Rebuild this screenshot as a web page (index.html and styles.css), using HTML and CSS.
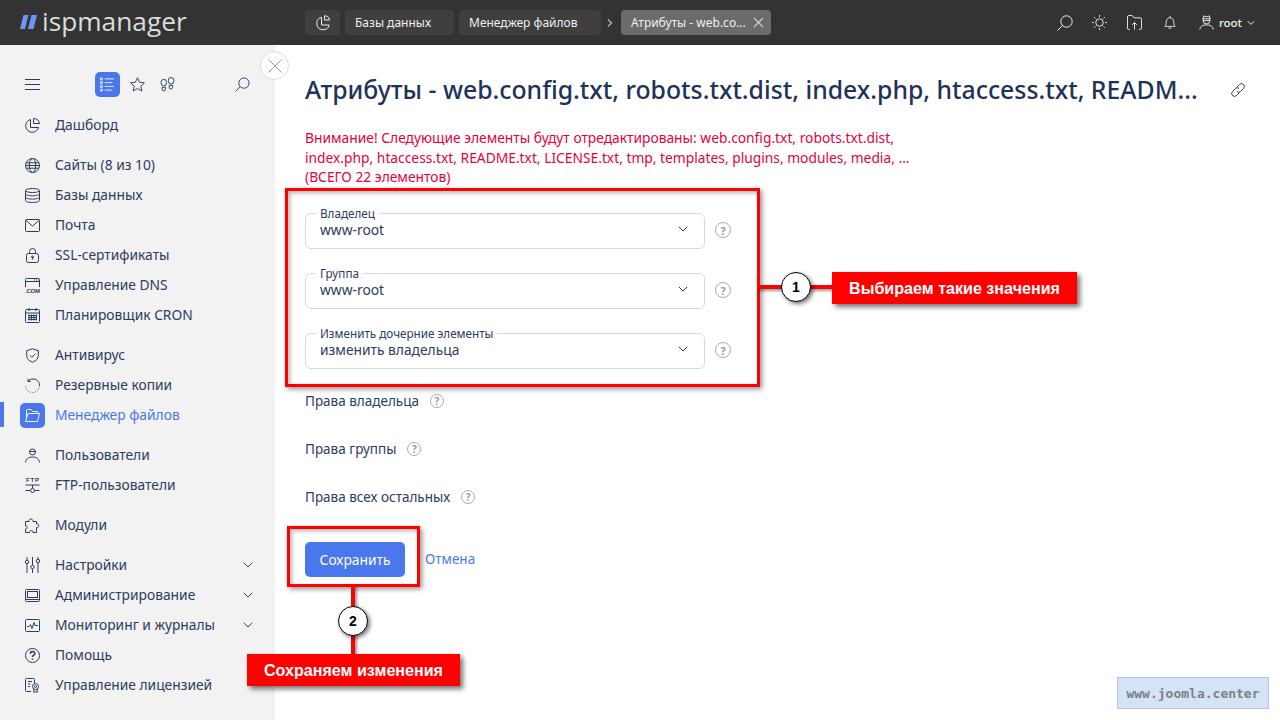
FILE: index.html
```html
<!DOCTYPE html>
<html lang="en">

<head>
    <meta charset="UTF-8">
    <meta name="viewport" content="width=device-width, initial-scale=1.0">
    <title>Атрибуты</title>
    <link rel="stylesheet" href="styles.css">
</head>

<body>
    <header class="topbar">
        <div class="logo">
            <svg class="logo-mark" width="17" height="14" viewBox="0 0 17 14"><path d="M3.500 0h5L5 14H0zM11.500 0H17l-3.500 14H8z" fill="#6d95f5"/></svg>
            <span>ispmanager</span>
        </div>
        <nav class="tabs">
            <a class="tab tab-home">
                <svg class="ico-w" width="16" height="16" viewBox="0 0 16 16"><path d="M6.500 2.300A6.300 6.300 0 1 0 14.200 10H6.500z"/><path d="M9.500.8v4.200h5a5 5 0 0 0-5-4.200z"/></svg>
            </a>
            <a class="tab">Базы данных</a>
            <a class="tab">Менеджер файлов</a>
            <svg class="tab-sep" width="10" height="8" viewBox="0 0 10 8"><path d="M2 .5L5.500 4 2 7.500"/></svg>
            <a class="tab tab-active">Атрибуты - web.co...
                <svg class="tab-close" width="11" height="11" viewBox="0 0 11 11"><path d="M1 1l9 9M10 1l-9 9"/></svg>
            </a>
        </nav>
        <div class="top-icons">
            <svg class="ico-w top-search" width="16" height="16" viewBox="0 0 16 16"><circle cx="9.500" cy="6.500" r="5.700"/><path d="M5.500 10.500L.5 15.500"/></svg>
            <svg class="ico-w" width="15" height="15" viewBox="0 0 16 16"><circle cx="8" cy="8" r="4"/><path d="M8 0v2M8 14v2M0 8h2M14 8h2M2.300 2.300l1.400 1.400M12.300 12.300l1.400 1.400M2.300 13.700l1.400-1.400M12.300 3.700l1.400-1.400"/></svg>
            <svg class="ico-w" width="15" height="15" viewBox="0 0 16 16"><path d="M3 15.500H2a1.500 1.500 0 0 1-1.500-1.500V2A1.500 1.500 0 0 1 2 .5h3.500L7.500 3h6.500A1.500 1.500 0 0 1 15.500 4.500V14a1.500 1.500 0 0 1-1.500 1.500h-1M8 15.500V8M5.500 10.500L8 8l2.500 2.500"/></svg>
            <svg class="ico-w bell" width="12" height="15" viewBox="0 0 14 16"><path d="M1 12.500c1-1 1.500-2 1.500-4.500C2.500 4.500 4.500 2.500 7 2.500s4.500 2 4.500 5.500c0 2.500.5 3.500 1.500 4.500zM7 2.500V.5M5 14.500h4"/></svg>
            <div class="user">
                <svg class="ico-w" width="15" height="15" viewBox="0 0 16 16"><path d="M4.500 3.500L5 1l3 .8L11 1l.5 2.500M3.500 4h9M4.500 4v2.500a3.500 3 0 0 0 7 0V4M4.500 6h7M.8 15.500c.5-3.500 3-5 7.200-5s6.700 1.500 7.200 5"/></svg>
                <span>root</span>
                <svg class="ico-w" width="8" height="6" viewBox="0 0 8 6"><path d="M.8 1.200L4 4.400l3.200-3.200"/></svg>
            </div>
        </div>
    </header>

    <div class="page">
        <aside class="sidebar">
            <button class="collapse">
                <svg width="14" height="14" viewBox="0 0 14 14"><path d="M.5.500l13 13M13.500.500l-13 13"/></svg>
            </button>
            <div class="side-tools">
                <svg class="ico" width="15" height="11" viewBox="0 0 15 11"><path d="M0 .5h15M0 5.500h15M0 10.500h15"/></svg>
                <div class="tool-group">
                    <span class="tool-active">
                        <svg class="ico-w" width="15" height="15" viewBox="0 0 16 15"><path d="M5 1.500h10M5 5.500h8M5 9.500h10M5 13.500h8"/><path d="M.5.500h2v2h-2zM.5 4.500h2v2h-2zM.5 8.500h2v2h-2zM.5 12.500h2v2h-2z"/></svg>
                    </span>
                    <svg class="ico" width="15" height="15" viewBox="0 0 16 16"><path d="M8 .8l2.200 4.800 5.200.6-3.900 3.500 1.100 5.200L8 12.300l-4.600 2.600 1.100-5.200L.6 6.200l5.200-.6z"/></svg>
                    <svg class="ico" width="15" height="15" viewBox="0 0 16 16"><ellipse cx="4" cy="6" rx="3" ry="3.500"/><path d="M2.200 11h3.600v2a1.800 1.800 0 0 1-3.600 0z"/><ellipse cx="11.800" cy="4" rx="3" ry="3.500"/><path d="M9.800 9h3.600v2a1.800 1.800 0 0 1-3.600 0z"/></svg>
                </div>
                <svg class="ico side-search" width="15" height="15" viewBox="0 0 16 16"><circle cx="9.500" cy="6.500" r="5.500"/><path d="M5.500 10.500L.5 15.500"/></svg>
            </div>

            <ul class="menu">
                <li class="menu-item">
                    <svg class="ico" width="15" height="15" viewBox="0 0 15 15"><path d="M5.500 1.500A6.500 6.500 0 1 0 13.500 9.500H5.500z"/><path d="M8.500.5v5h6a6 6 0 0 0-6-5z"/></svg>
                    Дашборд
                </li>
            </ul>
            <ul class="menu">
                <li class="menu-item">
                    <svg class="ico" width="15" height="15" viewBox="0 0 15 15"><circle cx="7.500" cy="7.500" r="7"/><ellipse cx="7.500" cy="7.500" rx="3.200" ry="7"/><path d="M1.200 4.800h12.600M.5 7.500h14M1.200 10.200h12.600"/></svg>
                    Сайты (8 из 10)
                </li>
                <li class="menu-item">
                    <svg class="ico" width="15" height="15" viewBox="0 0 15 15"><ellipse cx="7.500" cy="2.500" rx="7" ry="2"/><path d="M.5 2.500v10c0 1.100 3.100 2 7 2s7-.9 7-2v-10M.5 5.800c0 1.100 3.100 2 7 2s7-.9 7-2M.5 9.100c0 1.100 3.100 2 7 2s7-.9 7-2"/></svg>
                    Базы данных
                </li>
                <li class="menu-item">
                    <svg class="ico" width="15" height="13" viewBox="0 0 15 13"><rect x=".5" y=".5" width="14" height="12" rx="1"/><path d="M.8 1.200l6.700 6 6.700-6"/></svg>
                    Почта
                </li>
                <li class="menu-item">
                    <svg class="ico" width="15" height="15" viewBox="0 0 15 15"><rect x="1.500" y="5.500" width="12" height="9" rx="2"/><path d="M4.500 5.500V3.500a3 3 0 0 1 6 0v2M7.500 9v2.500"/><circle cx="7.500" cy="9" r="1"/></svg>
                    SSL-сертификаты
                </li>
                <li class="menu-item">
                    <svg class="ico" width="15" height="15" viewBox="0 0 15 15"><path d="M.5 9V1.500a1 1 0 0 1 1-1h12a1 1 0 0 1 1 1V9M.5 3.500h14M9 2h1M11 2h1M13 2h.8"/><text class="ico-text" x="0" y="15" textLength="15">.COM</text></svg>
                    Управление DNS
                </li>
                <li class="menu-item">
                    <svg class="ico" width="15" height="15" viewBox="0 0 15 15"><rect x=".5" y="1.500" width="14" height="13" rx="1"/><path d="M.5 5h14M4 0v3M11 0v3M3 7.500h9M3 9.500h9M3 11.500h9M4 6.500v6M6.500 6.500v6M9 6.500v6M11.500 6.500v6"/></svg>
                    Планировщик CRON
                </li>
            </ul>
            <ul class="menu">
                <li class="menu-item">
                    <svg class="ico" width="15" height="15" viewBox="0 0 15 15"><path d="M7.500.8l5.800 1.900v5c0 3-2.300 5.300-5.800 6.500-3.500-1.200-5.800-3.500-5.800-6.500v-5z"/><path d="M4.800 7.300l2 2 3.500-3.500"/></svg>
                    Антивирус
                </li>
                <li class="menu-item">
                    <svg class="ico" width="15" height="15" viewBox="0 0 15 15"><path d="M3 3.200A6.500 6.500 0 0 1 14.500 7.500M3 .8v2.700h2.700"/><path class="dotted" d="M14.500 7.500A7 7 0 0 1 .5 7.500"/></svg>
                    Резервные копии
                </li>
                <li class="menu-item menu-active">
                    <span class="menu-active-ico">
                        <svg class="ico-w" width="15" height="13" viewBox="0 0 15 13"><path d="M1.500 9V1.500a1 1 0 0 1 1-1H6l1.500 2h4.500a1 1 0 0 1 1 1v1.500"/><path d="M3 4.500h11.500l-2 8H.5z"/></svg>
                    </span>
                    Менеджер файлов
                </li>
            </ul>
            <ul class="menu">
                <li class="menu-item">
                    <svg class="ico" width="15" height="15" viewBox="0 0 15 15"><circle cx="7.500" cy="4" r="3"/><path d="M4.600 3.500h5.800M.5 14.500c.3-3.500 3-5.500 7-5.500s6.700 2 7 5.500"/></svg>
                    Пользователи
                </li>
                <li class="menu-item">
                    <svg class="ico" width="15" height="17" viewBox="0 0 15 17"><text class="ico-text" x="1" y="5" textLength="13">FTP</text><path d="M.5 8h14M7.500 8v3M.5 13.500h4.500M10 13.500h4.500"/><circle cx="7.500" cy="13.500" r="2"/></svg>
                    FTP-пользователи
                </li>
            </ul>
            <ul class="menu">
                <li class="menu-item">
                    <svg class="ico" width="15" height="15" viewBox="0 0 15 15"><path d="M.5 3.500h3.500c-1-2.500 4-4 4 0h3.500V6c3-1 3 4.500 0 3.500v5H8c1-2.500-4-2.500-3.500 0H.5V11c2 .5 2.500-3.500 0-3z"/></svg>
                    Модули
                </li>
            </ul>
            <ul class="menu">
                <li class="menu-item">
                    <svg class="ico" width="15" height="16" viewBox="0 0 15 16"><path d="M2 0v3M2 7v9M7.500 0v8M7.500 12v4M13 0v2M13 6v10"/><circle cx="2" cy="5" r="1.700"/><circle cx="7.500" cy="10" r="1.700"/><circle cx="13" cy="4" r="1.700"/></svg>
                    Настройки
                    <svg class="ico chevron" width="10" height="6" viewBox="0 0 10 6"><path d="M.8.800L5 5l4.200-4.200"/></svg>
                </li>
                <li class="menu-item">
                    <svg class="ico" width="15" height="13" viewBox="0 0 15 13"><rect x=".5" y=".5" width="14" height="12" rx="1"/><rect x="2.500" y="2.500" width="10" height="6"/><path d="M.5 10.500h14"/></svg>
                    Администрирование
                    <svg class="ico chevron" width="10" height="6" viewBox="0 0 10 6"><path d="M.8.800L5 5l4.200-4.200"/></svg>
                </li>
                <li class="menu-item">
                    <svg class="ico" width="15" height="13" viewBox="0 0 15 13"><rect x=".5" y=".5" width="14" height="12" rx="1"/><path d="M2 7.500h2l1.500-2 1.500 4 2-6 1 3h3"/></svg>
                    Мониторинг и журналы
                    <svg class="ico chevron" width="10" height="6" viewBox="0 0 10 6"><path d="M.8.800L5 5l4.200-4.200"/></svg>
                </li>
                <li class="menu-item">
                    <svg class="ico" width="15" height="15" viewBox="0 0 15 15"><circle cx="7.500" cy="7.500" r="7"/><path class="ico-thick" d="M5.300 5.800c0-3 4.500-3 4.500-.3 0 1.700-2.300 1.700-2.300 3.500M7.500 10.500v1.200"/></svg>
                    Помощь
                </li>
                <li class="menu-item">
                    <svg class="ico" width="15" height="15" viewBox="0 0 15 15"><path d="M6 13.500H1.500a1 1 0 0 1-1-1v-11a1 1 0 0 1 1-1h7a1 1 0 0 1 1 1V5M3 3.500h4M3 6h2.500M3 8.500h2"/><circle cx="10.500" cy="8.500" r="3"/><circle cx="10.500" cy="8.500" r="1"/><path d="M8.800 11v3.500l1.700-1 1.700 1V11"/></svg>
                    Управление лицензией
                </li>
            </ul>
        </aside>

        <main class="content">
            <div class="title-row">
                <h1 class="title">Атрибуты - web.config.txt, robots.txt.dist, index.php, htaccess.txt, READM...</h1>
                <svg class="ico link-ico" width="16" height="16" viewBox="0 0 16 16"><path d="M6.500 5.500l3-3a2.500 2.500 0 0 1 4 4l-3 3a2.500 2.500 0 0 1-3.500 0M9.500 10.500l-3 3a2.500 2.500 0 0 1-4-4l3-3a2.500 2.500 0 0 1 3.500 0"/></svg>
            </div>

            <p class="warning">Внимание! Следующие элементы будут отредактированы: web.config.txt, robots.txt.dist, index.php, htaccess.txt, README.txt, LICENSE.txt, tmp, templates, plugins, modules, media, ... (ВСЕГО 22 элементов)</p>

            <form class="attr-form">
                <div class="field-row">
                    <fieldset class="field">
                        <legend>Владелец</legend>
                        <div class="field-value">www-root
                            <svg class="ico" width="10" height="6" viewBox="0 0 10 6"><path d="M.8.800L5 5l4.200-4.200"/></svg>
                        </div>
                    </fieldset>
                    <span class="help help-lg">?</span>
                </div>
                <div class="field-row">
                    <fieldset class="field">
                        <legend>Группа</legend>
                        <div class="field-value">www-root
                            <svg class="ico" width="10" height="6" viewBox="0 0 10 6"><path d="M.8.800L5 5l4.200-4.200"/></svg>
                        </div>
                    </fieldset>
                    <span class="help help-lg">?</span>
                </div>
                <div class="field-row">
                    <fieldset class="field">
                        <legend>Изменить дочерние элементы</legend>
                        <div class="field-value">изменить владельца
                            <svg class="ico" width="10" height="6" viewBox="0 0 10 6"><path d="M.8.800L5 5l4.200-4.200"/></svg>
                        </div>
                    </fieldset>
                    <span class="help help-lg">?</span>
                </div>

                <div class="rights">
                    <div class="rights-row">Права владельца <span class="help">?</span></div>
                    <div class="rights-row">Права группы <span class="help">?</span></div>
                    <div class="rights-row">Права всех остальных <span class="help">?</span></div>
                </div>

                <div class="actions">
                    <button class="btn-save" type="button">Сохранить</button>
                    <a class="btn-cancel">Отмена</a>
                </div>
            </form>
        </main>
    </div>

    <!-- annotations drawn over the screenshot -->
    <div class="mark mark-fields"></div>
    <div class="mark mark-save"></div>
    <div class="line line-h"></div>
    <div class="line line-v"></div>
    <div class="step step-1">1</div>
    <div class="step step-2">2</div>
    <div class="note note-1">Выбираем такие значения</div>
    <div class="note note-2">Сохраняем изменения</div>
    <div class="watermark">www.joomla.center</div>
</body>

</html>
```

FILE: styles.css
```css
* {
    box-sizing: border-box;
}

html,
body {
    height: 100%;
}

body {
    margin: 0;
    overflow: hidden;
    background-color: #fff;
    color: #2c3c5e;
    font-family: "Noto Sans", Arial, sans-serif;
    font-size: 13.800px;
}

svg {
    display: block;
    flex-shrink: 0;
}

.ico,
.ico-w {
    fill: none;
    stroke-width: 1;
}

.ico {
    stroke: #2c3c5e;
}

.ico-w {
    stroke: #f0f0f0;
}

.ico-text {
    fill: #2c3c5e;
    stroke: none;
    font-family: "Liberation Sans", Arial, sans-serif;
    font-size: 6px;
    font-weight: 700;
}

.ico-thick {
    stroke-width: 1.6;
}

.dotted {
    stroke-dasharray: 1 1.500;
}

/* top bar */
.topbar {
    display: flex;
    align-items: center;
    height: 45px;
    background-color: #333;
    color: #f0f0f0;
}

.logo {
    display: flex;
    align-items: center;
    gap: 5px;
    width: 305px;
    padding-left: 20px;
    color: #dcdcdc;
    font-family: "Open Sans", Arial, sans-serif;
    font-size: 26.300px;
    line-height: 1;
}

.logo span {
    margin-top: -3px;
}

.tabs {
    display: flex;
    align-items: center;
    gap: 5px;
    font-size: 12px;
}

.tab {
    display: flex;
    align-items: center;
    height: 25px;
    padding: 0 10px;
    background-color: #3f3f3f;
    border-radius: 4px;
}

.tab-home {
    width: 35px;
    justify-content: center;
}

.tab:nth-child(2) {
    width: 109px;
}

.tab:nth-child(3) {
    width: 142px;
}

.tab-sep {
    fill: none;
    stroke: #aaa;
    stroke-width: 1.500;
}

.tab-close {
    fill: none;
    stroke: #ccc;
    stroke-width: 1.300;
}

.tab-active {
    justify-content: space-between;
    width: 150px;
    padding-right: 7px;
    background-color: #6b6b6b;
}

.top-icons {
    display: flex;
    align-items: center;
    gap: 20px;
    margin-left: auto;
    padding-right: 25px;
}

.top-search {
    margin-right: -1px;
}

.bell {
    margin: 0 3px 0 2px;
}

.user {
    display: flex;
    align-items: center;
    gap: 5px;
    font-size: 11.500px;
    font-weight: 500;
}

/* sidebar */
.page {
    display: flex;
    height: 675px;
}

.sidebar {
    position: relative;
    width: 275px;
    flex-shrink: 0;
    padding-top: 27px;
    background-color: #f2f2f2;
}

.collapse {
    position: absolute;
    top: 6px;
    right: -14px;
    z-index: 2;
    display: flex;
    align-items: center;
    justify-content: center;
    width: 29px;
    height: 29px;
    padding: 0;
    background-color: #fff;
    border: 1px solid #ddd;
    border-radius: 50%;
}

.collapse svg {
    fill: none;
    stroke: #999;
}

.side-tools {
    display: flex;
    align-items: center;
    height: 25px;
    margin-bottom: 13px;
    padding: 0 25px;
}

.tool-group {
    display: flex;
    align-items: center;
    gap: 15px;
    margin-left: 55px;
}

.tool-active {
    display: flex;
    align-items: center;
    justify-content: center;
    width: 25px;
    height: 25px;
    margin-right: -5px;
    background-color: #4a78ec;
    border-radius: 5px;
}

.side-search {
    margin-left: auto;
}

.menu {
    margin: 0 0 10px;
    padding: 0;
    list-style: none;
}

.menu-item {
    position: relative;
    display: flex;
    align-items: center;
    gap: 15px;
    height: 30px;
    padding: 0 22px 2px 25px;
}

.menu-item > svg,
.menu-active-ico {
    margin-top: 2px;
}

.menu-item > .ico:first-child {
    width: 15px;
}

.chevron {
    margin-left: auto;
}

.menu-active {
    gap: 10px;
    padding-left: 20px;
    color: #4a78ec;
}

.menu-active::before {
    content: "";
    position: absolute;
    top: 2px;
    left: 0;
    width: 4px;
    height: 25px;
    background-color: #4a78ec;
}

.menu-active-ico {
    display: flex;
    align-items: center;
    justify-content: center;
    width: 25px;
    height: 25px;
    background-color: #4a78ec;
    border-radius: 5px;
}

/* main content */
.content {
    flex: 1;
    padding: 28px 30px 0;
    min-width: 0;
}

.title-row {
    display: flex;
    align-items: center;
    height: 34px;
}

.title {
    width: 895px;
    margin: -2px 0 0;
    color: #1f3358;
    font-size: 24.800px;
    font-weight: 500;
    line-height: 34px;
    white-space: nowrap;
}

.link-ico {
    margin-left: 30px;
}

.warning {
    width: 610px;
    margin: 21px 0 21px;
    color: #e6003c;
    line-height: 19.500px;
}

.attr-form {
    display: flex;
    flex-direction: column;
}

.field-row {
    display: flex;
    align-items: center;
    gap: 10px;
    margin-bottom: 19px;
}

.field {
    width: 400px;
    height: 41px;
    margin: 0;
    padding: 0 16px 0 14px;
    border: 1px solid #d9d9d9;
    border-radius: 6px;
}

.field legend {
    padding: 0 4px;
    margin-left: -4px;
    font-size: 11.700px;
    line-height: 1;
}

.field-value {
    display: flex;
    align-items: center;
    justify-content: space-between;
    height: 20px;
}

.help {
    display: inline-flex;
    align-items: center;
    justify-content: center;
    width: 14px;
    height: 14px;
    margin-left: 11px;
    color: #999;
    border: 1px solid #aaa;
    border-radius: 50%;
    font-size: 10px;
    font-weight: 700;
}

.help-lg {
    width: 16px;
    height: 16px;
    margin-top: 4px;
    margin-left: 0;
    font-size: 11px;
}

.rights {
    display: flex;
    flex-direction: column;
    gap: 24px;
    margin-top: 1px;
}

.rights-row {
    display: flex;
    align-items: center;
    height: 24px;
    font-size: 13.500px;
}

.actions {
    display: flex;
    align-items: center;
    gap: 20px;
    margin-top: 33px;
}

.btn-save {
    width: 100px;
    height: 35px;
    padding: 0;
    color: #fff;
    background-color: #4a78ec;
    border: none;
    border-radius: 5px;
    font-family: inherit;
    font-size: 13.800px;
}

.btn-cancel {
    color: #4a78ec;
    font-size: 13.500px;
}

/* annotations */
.mark,
.line,
.step,
.note,
.watermark {
    position: absolute;
}

.mark {
    border: 3px solid #f00;
    box-shadow: 2px 2px 5px rgba(0, 0, 0, 0.45), inset 2px 2px 4px rgba(0, 0, 0, 0.3);
}

.mark-fields {
    top: 188px;
    left: 285px;
    width: 475px;
    height: 199px;
}

.mark-save {
    top: 526px;
    left: 287px;
    width: 133px;
    height: 61px;
}

.line {
    background-color: #f00;
    box-shadow: 2px 2px 3px rgba(0, 0, 0, 0.4);
}

.line-h {
    top: 285px;
    left: 757px;
    width: 77px;
    height: 4px;
}

.line-v {
    top: 585px;
    left: 351px;
    width: 4px;
    height: 70px;
}

.step {
    display: flex;
    align-items: center;
    justify-content: center;
    width: 30px;
    height: 30px;
    color: #000;
    background-color: #fff;
    border: 1px solid #000;
    border-radius: 50%;
    box-shadow: 2px 2px 4px rgba(0, 0, 0, 0.55);
    font-family: "Liberation Sans", Arial, sans-serif;
    font-size: 14px;
    font-weight: 700;
}

.step-1 {
    top: 272px;
    left: 781px;
}

.step-2 {
    top: 606px;
    left: 338px;
}

.note {
    display: flex;
    align-items: center;
    justify-content: center;
    color: #fff;
    background-color: #f00;
    box-shadow: 3px 3px 5px rgba(0, 0, 0, 0.55);
    font-family: "Liberation Sans", Arial, sans-serif;
    font-size: 16.100px;
    font-weight: 700;
}

.note-1 {
    top: 272px;
    left: 832px;
    width: 245px;
    height: 32px;
}

.note-2 {
    top: 654px;
    left: 247px;
    width: 213px;
    height: 32px;
}

.watermark {
    top: 677px;
    left: 1117px;
    display: flex;
    align-items: center;
    justify-content: center;
    width: 152px;
    height: 32px;
    color: #808080;
    background-color: #d3e4f9;
    border: 1px solid #b8c4d4;
    font-family: "DejaVu Sans Mono", monospace;
    font-size: 13px;
    font-weight: 700;
}
```
